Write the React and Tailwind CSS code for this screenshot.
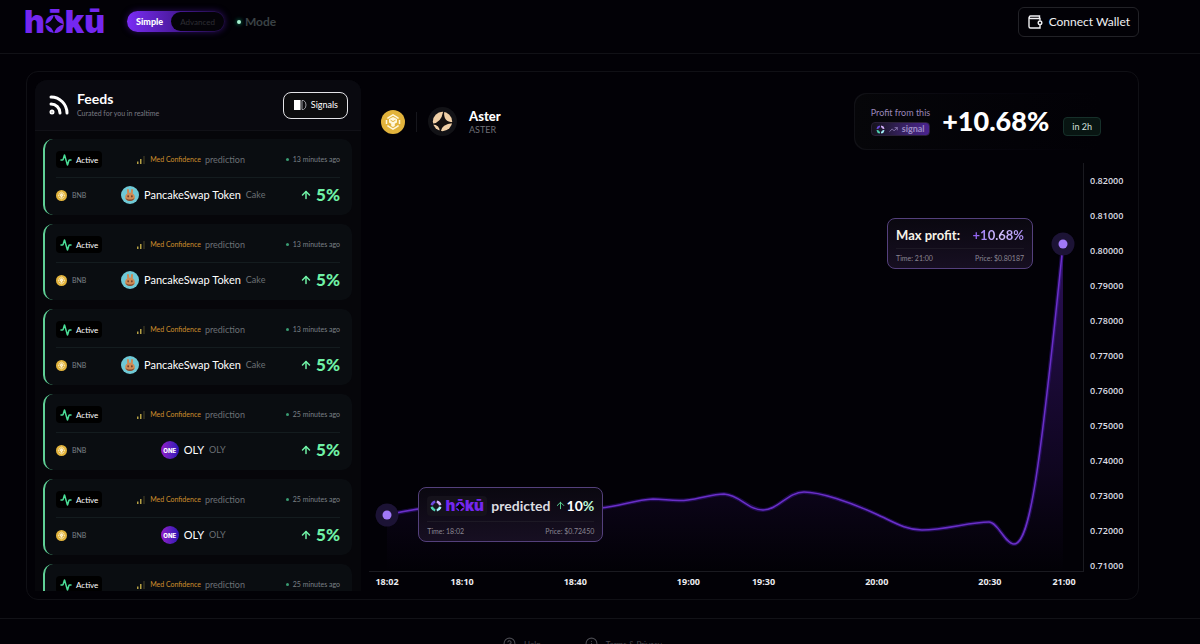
import { useState } from 'react'
import { Activity, ArrowUp, CircleHelp, Info, Rss, TrendingUp } from 'lucide-react'

const feeds = [
  { id: 1, name: 'PancakeSwap Token', symbol: 'Cake', icon: 'cake', time: '13 minutes ago', gain: '5%' },
  { id: 2, name: 'PancakeSwap Token', symbol: 'Cake', icon: 'cake', time: '13 minutes ago', gain: '5%' },
  { id: 3, name: 'PancakeSwap Token', symbol: 'Cake', icon: 'cake', time: '13 minutes ago', gain: '5%' },
  { id: 4, name: 'OLY', symbol: 'OLY', icon: 'one', time: '25 minutes ago', gain: '5%' },
  { id: 5, name: 'OLY', symbol: 'OLY', icon: 'one', time: '25 minutes ago', gain: '5%' },
  { id: 6, name: 'OLY', symbol: 'OLY', icon: 'one', time: '25 minutes ago', gain: '5%' },
]

const prices = ['0.82000', '0.81000', '0.80000', '0.79000', '0.78000', '0.77000', '0.76000', '0.75000', '0.74000', '0.73000', '0.72000', '0.71000']

// x is in chart units, 0 to 714
const times = [
  { x: 18, label: '18:02' },
  { x: 93, label: '18:10' },
  { x: 206, label: '18:40' },
  { x: 319, label: '19:00' },
  { x: 394, label: '19:30' },
  { x: 507, label: '20:00' },
  { x: 620, label: '20:30' },
  { x: 694, label: '21:00' },
]

const CHART_W = 714
const CHART_H = 408
const line =
  'M18 352 C30 349 42 347 56 345 C110 336 190 347 231 345 C251 343 266 337 284 336 C296 336 306 339 319 337 C331 336 343 331 355 331 C371 332 379 347 394 347 C409 347 419 329 435 329 C451 329 481 339 507 351 C523 358 536 367 553 367 C576 367 601 359 620 359 C629 359 636 381 645 381 C661 381 671 307 694 81'

function Logo({ className }) {
  return (
    <svg viewBox="0 0 80 25" className={className} overflow="visible" role="img" aria-label="hōkū">
      <text x="-1" y="24" className="fill-[#7427f0] font-['Inter'] text-[32px] font-black">hōkū</text>
      {/* four-petal cut through the o */}
      <path d="M29 5.800Q30.500 13 38.500 15.300Q30.500 17.500 29 25Q27.500 17.500 19.500 15.300Q27.500 13 29 5.800Z" fill="#05030c" />
      <path d="M29 9.500L34.800 15.300L29 21.100L23.200 15.300Z" fill="#05030c" />
    </svg>
  )
}

function Orb({ className }) {
  return (
    <svg viewBox="0 0 24 24" className={className} fill="none" strokeWidth="5">
      <path d="M13.500 3.600A8.500 8.500 0 0 1 20.400 10.500" stroke="#d8b4fe" />
      <path d="M20.400 13.500A8.500 8.500 0 0 1 13.500 20.400" stroke="#a5f3fc" />
      <path d="M10.500 20.400A8.500 8.500 0 0 1 3.600 13.500" stroke="#4fd3b0" />
      <path d="M3.600 10.500A8.500 8.500 0 0 1 10.500 3.600" stroke="#6d4ae0" />
    </svg>
  )
}

function BnbIcon({ className }) {
  return (
    <svg viewBox="0 0 24 24" className={className} fill="none">
      <circle cx="12" cy="12" r="12" fill="#e2b33c" />
      <path d="M7 8.800V7.800L12 4.800L17 7.800V8.800M7 15.200V16.200L12 19.200L17 16.200V15.200M5.500 10V14M18.500 10V14" stroke="#fff7dc" strokeWidth="1.500" />
      <path d="M8 9L12 7L16 9V12.500L13.800 13.800V16L12 17L10.200 16V13.800L8 12.500Z" fill="#fff7dc" />
      <path d="M9.500 10.200L12 11.600L14.500 10.200" stroke="#e2b33c" />
    </svg>
  )
}

function CakeIcon() {
  return (
    <svg viewBox="0 0 24 24" className="size-[18px]">
      <circle cx="12" cy="12" r="12" fill="#6fc9d6" />
      <path d="M8 6C8 3.500 10.500 3.500 10.700 6L11 9H13L13.300 6C13.500 3.500 16 3.500 16 6L15.700 10C17.700 11.500 18.500 13 18.500 15C18.500 18.300 15.500 20 12 20C8.500 20 5.500 18.300 5.500 15C5.500 13 6.300 11.500 8.300 10Z" fill="#d08b55" />
      <path d="M6 16C7 18.500 9 20 12 20C15 20 17 18.500 18 16C16 17.700 14.500 18 12 18C9.500 18 8 17.700 6 16Z" fill="#7a4630" />
      <ellipse cx="9.500" cy="13.700" rx="1" ry="1.500" fill="#5a3324" />
      <ellipse cx="14.500" cy="13.700" rx="1" ry="1.500" fill="#5a3324" />
    </svg>
  )
}

function OneIcon() {
  return (
    <span className="flex size-[18px] items-center justify-center rounded-full bg-linear-to-r from-[#9418c8] to-[#2a12b4] font-['Inter'] text-[6px] font-extrabold text-white">ONE</span>
  )
}

function AsterIcon() {
  return (
    <svg viewBox="0 0 30 30" className="size-[29px]">
      <circle cx="15" cy="15" r="15" fill="#121216" />
      <circle cx="15" cy="15" r="10" fill="#f0cfa6" />
      <path d="M16.800 4.500Q15.500 15.800 26 15.800V16.600Q14 17.500 13 25.800H12Q12.500 18.500 4.500 18.200V17.200Q13.500 17 15.800 4.500Z" fill="#15100f" />
    </svg>
  )
}

function WalletIcon() {
  return (
    <svg viewBox="0 0 16 16" className="size-4" fill="none" stroke="currentColor" strokeWidth="1.400">
      <path d="M13 6.500V4.500H3.500A1.250 1.250 0 0 1 3.500 2H12.500V4.500M2 3.300V12.500Q2 14 3.500 14H13V11" />
      <circle cx="13" cy="8.800" r="1.800" />
    </svg>
  )
}

function Header() {
  const [mode, setMode] = useState('simple')
  return (
    <header className="flex h-[54px] items-center justify-between border-b border-[#111116] pr-[61px] pb-[10px] pl-[25px]">
      <div className="flex items-center">
        <a href="#home"><Logo className="h-[25px] w-20" /></a>
        <div className="ml-[22px] flex h-[21px] items-center rounded-full bg-linear-to-r from-[#7a2cf5] via-[#4a1a9c] to-[#1c0a3c] p-px shadow-[0_0_6px_#2a0f5c]">
          <button onClick={() => setMode('simple')} aria-pressed={mode === 'simple'} className="px-2 text-[9px] font-black text-white">Simple</button>
          <button onClick={() => setMode('advanced')} aria-pressed={mode === 'advanced'} className="h-full rounded-full bg-[#040308] px-[9px] text-[8px] text-[#2e2e34]">Advanced</button>
        </div>
        <span className="ml-3 size-1 rounded-full bg-[#a7f3d0] shadow-[0_0_4px_#10b981]" />
        <span className="ml-1 text-xs font-bold text-[#3a4245]">Mode</span>
      </div>
      <button className="flex h-[30px] items-center gap-1.5 rounded-md border border-[#222227] px-2 text-xs text-[#f0f0f3]">
        <WalletIcon />
        Connect Wallet
      </button>
    </header>
  )
}

function FeedCard({ feed }) {
  return (
    <li className="h-[76px] shrink-0 rounded-[10px] border-l-2 border-[#5fd096] bg-[#0a0d11] pt-3 pr-3 pl-[11px]">
      <div className="flex items-center justify-between border-b border-[#141c1f] pb-[9px]">
        <span className="flex h-[17px] items-center gap-1 rounded-sm bg-black px-1 text-[8px] text-white">
          <Activity size={12} strokeWidth={3} className="text-[#4ade97]" />Active
        </span>
        <span className="flex items-center gap-1 pr-1.5 text-[9px] text-[#6b7075]">
          <svg viewBox="0 0 8 8" className="mr-px size-2">
            <path d="M0 5.500H1.500V8H0ZM3 3H4.500V8H3Z" fill="#b5a044" />
            <path d="M6.500 0H7.500V8H6.500Z" fill="#4a4426" />
          </svg>
          <span className="text-[7px] text-[#d08f2c]">Med Confidence</span>
          prediction
        </span>
        <span className="flex items-center gap-1 text-[7px] text-[#7b8187]">
          <span className="size-[3px] rounded-full bg-[#3a9a72]" />{feed.time}
        </span>
      </div>
      <div className="flex h-[34px] items-center justify-between">
        <span className="flex items-center gap-[5px] text-[7px] text-[#7b8187]"><BnbIcon className="size-[11px]" />BNB</span>
        <span className="flex items-center gap-[5px]">
          {feed.icon === 'cake' ? <CakeIcon /> : <OneIcon />}
          <span className="text-[11px] text-white">{feed.name}</span>
          <span className="text-[9px] text-[#6b7075]">{feed.symbol}</span>
        </span>
        <span className="flex items-center gap-1 text-[17px] font-black text-[#6ff2a6]">
          <ArrowUp size={12} strokeWidth={3} />{feed.gain}
        </span>
      </div>
    </li>
  )
}

function Feeds() {
  return (
    <aside className="flex w-[326px] shrink-0 flex-col overflow-hidden rounded-t-xl bg-[#06060a]">
      <div className="flex h-[51px] shrink-0 items-center justify-between border-b border-[#111117] bg-[#09090f] pr-[13px] pl-3">
        <div className="flex items-center gap-1.5">
          <Rss size={24} strokeWidth={3} className="text-white" />
          <div>
            <h2 className="text-sm leading-4 font-bold text-white">Feeds</h2>
            <p className="text-[7px] leading-3 text-[#7b7b84]">Curated for you in realtime</p>
          </div>
        </div>
        <button className="flex h-[27px] items-center gap-1 rounded-lg border border-[#e4e4e8] bg-[#0c0c0e] px-[9px] text-[9px] text-white">
          <svg viewBox="0 0 14 12" className="h-3 w-[14px]" fill="none">
            <path d="M1 1H7.500V11H1Z" fill="#fff" />
            <path d="M9 1.500H10.500Q13 2.500 13 6Q13 9.500 10.500 10.500H9Z" stroke="#9a9aa0" />
          </svg>
          Signals
        </button>
      </div>
      <ul className="flex min-h-0 flex-1 flex-col gap-[9px] overflow-hidden pt-2 pr-[9px] pl-2">
        {feeds.map((f) => <FeedCard key={f.id} feed={f} />)}
      </ul>
    </aside>
  )
}

function Marker({ x, y }) {
  return (
    <span
      className="absolute flex size-[23px] -translate-1/2 items-center justify-center rounded-full bg-[#1c1335]"
      style={{ left: `${(x / CHART_W) * 100}%`, top: `${(y / CHART_H) * 100}%` }}
    >
      <span className="size-[9px] rounded-full bg-[#a078f8]" />
    </span>
  )
}

function Chart() {
  return (
    <div className="mt-[13px] flex min-h-0 flex-1 flex-col">
      <div className="flex min-h-0 flex-1">
        <div className="relative flex-1 border-r border-b border-[#1a1a20]">
          <svg viewBox="0 0 714 408" preserveAspectRatio="none" className="absolute inset-0 size-full" fill="none">
            <defs>
              <linearGradient id="area" x1="0" y1="81" x2="0" y2="408" gradientUnits="userSpaceOnUse">
                <stop offset="0" stopColor="#6d28d9" stopOpacity="0.400" />
                <stop offset="0.700" stopColor="#5b21b6" stopOpacity="0.140" />
                <stop offset="1" stopColor="#4c1d95" stopOpacity="0" />
              </linearGradient>
            </defs>
            <path d={`${line} V408 H18 Z`} fill="url(#area)" />
            <path d={line} stroke="#4c1dc0" strokeOpacity="0.350" strokeWidth="4" />
            <path d={line} stroke="#6a2fc8" strokeWidth="1.500" />
          </svg>
          <Marker x={18} y={352} />
          <Marker x={694} y={81} />

          <div className="absolute top-[79.4%] left-[6.9%] w-[185px] rounded-lg border border-[#54407c] bg-linear-to-b from-[#0a0810] to-[#170f22] px-2 pt-[7px] pb-1">
            <div className="flex h-[22px] items-center justify-between text-sm font-bold">
              <span className="flex h-5 items-center gap-1 rounded-sm bg-[#15121b] px-[3px]">
                <Orb className="size-3" /><Logo className="h-3 w-[38px]" />
              </span>
              <span className="text-[#dcdce0]">predicted</span>
              <span className="flex items-center text-white">
                <ArrowUp size={11} className="mr-px text-[#5fe39c]" />10<span className="text-[#b9f5d3]">%</span>
              </span>
            </div>
            <div className="mt-1 flex justify-between border-t border-[#1d1925] pt-[3px] text-[7px] leading-3 text-[#8a8692]">
              <span>Time: 18:02</span><span>Price: $0.72450</span>
            </div>
          </div>

          <div className="absolute top-[13.5%] right-[7%] w-[146px] rounded-lg border border-[#54407c] bg-linear-to-b from-[#0a0810] to-[#170f22] px-2 pt-[7px] pb-1">
            <div className="flex h-5 items-center justify-between text-[13px] font-bold">
              <span className="text-[#f6f3e8]">Max profit:</span>
              <span className="bg-linear-to-r from-[#8a55ee] via-[#d6c6ff] to-[#a988f0] bg-clip-text text-transparent">+10.68%</span>
            </div>
            <div className="mt-0.5 flex justify-between border-t border-[#1d1925] pt-[3px] text-[7px] leading-3 text-[#8a8692]">
              <span>Time: 21:00</span><span>Price: $0.80187</span>
            </div>
          </div>
        </div>
        <div className="flex w-[46px] flex-col justify-between pt-3 pl-1.5 font-['Open_Sans'] text-[9px] leading-3 font-semibold text-[#dcdce2]">
          {prices.map((p) => <span key={p}>{p}</span>)}
        </div>
      </div>
      <div className="relative mr-[46px] h-[19px] font-['Open_Sans'] text-[9px] leading-5 font-bold text-[#ececf0]">
        {times.map((t) => (
          <span key={t.label} className="absolute -translate-x-1/2" style={{ left: `${(t.x / CHART_W) * 100}%` }}>{t.label}</span>
        ))}
      </div>
    </div>
  )
}

function SignalDetail() {
  return (
    <section className="flex min-w-0 flex-1 flex-col">
      <div className="mt-[13px] flex h-[57px] items-center justify-between pr-7 pl-3">
        <div className="flex items-center">
          <BnbIcon className="size-6" />
          <span className="mx-[11px] h-5 w-px bg-[#16161c]" />
          <AsterIcon />
          <div className="ml-3">
            <h1 className="text-[13px] leading-4 font-black text-white">Aster</h1>
            <p className="text-[9px] leading-3 text-[#6f6f76]">ASTER</p>
          </div>
        </div>
        <div className="flex h-full items-center rounded-xl bg-linear-to-r from-[#111116] to-[#020106] p-px">
          <div className="flex h-full items-center rounded-xl bg-linear-to-r from-[#060609] to-[#020106] pl-4">
            <div>
              <p className="text-[9px] leading-3 text-[#9a86b8]">Profit from this</p>
              <p className="mt-[3px] flex h-[14px] items-center gap-1 rounded-sm border border-[#2a2038] bg-linear-to-r from-[#15121c] via-[#35205c] to-[#4a2390] px-1 text-[9px] font-bold text-[#9d8cc4]">
                <Orb className="size-[9px]" /><TrendingUp size={9} />signal
              </p>
            </div>
            <p className="ml-3 text-[27px] font-black text-white">+10.68%</p>
            <span className="mt-[10px] ml-[14px] flex h-[19px] items-center rounded-sm border border-[#16302a] bg-[#081512] px-2 text-[9px] text-[#d5e0dc]">in 2h</span>
          </div>
        </div>
      </div>
      <Chart />
    </section>
  )
}

export default function App() {
  return (
    <div className="h-screen overflow-hidden bg-[#020106] font-['Lato',sans-serif]">
      <Header />
      <main className="pt-[17px] pr-[61px] pb-[18px] pl-[26px]">
        <div className="flex h-[calc(100vh-115px)] gap-2 rounded-xl border border-[#101015] p-2">
          <Feeds />
          <SignalDetail />
        </div>
      </main>
      <footer className="flex justify-center gap-[44px] border-t border-[#121217] pt-[18px] pr-[61px] pl-[26px] text-[8px] text-[#4a4a50]">
        <a href="#help" className="flex items-center gap-2"><CircleHelp size={13} />Help</a>
        <a href="#terms" className="flex items-center gap-2"><Info size={13} />Terms &amp; Privacy</a>
      </footer>
    </div>
  )
}
